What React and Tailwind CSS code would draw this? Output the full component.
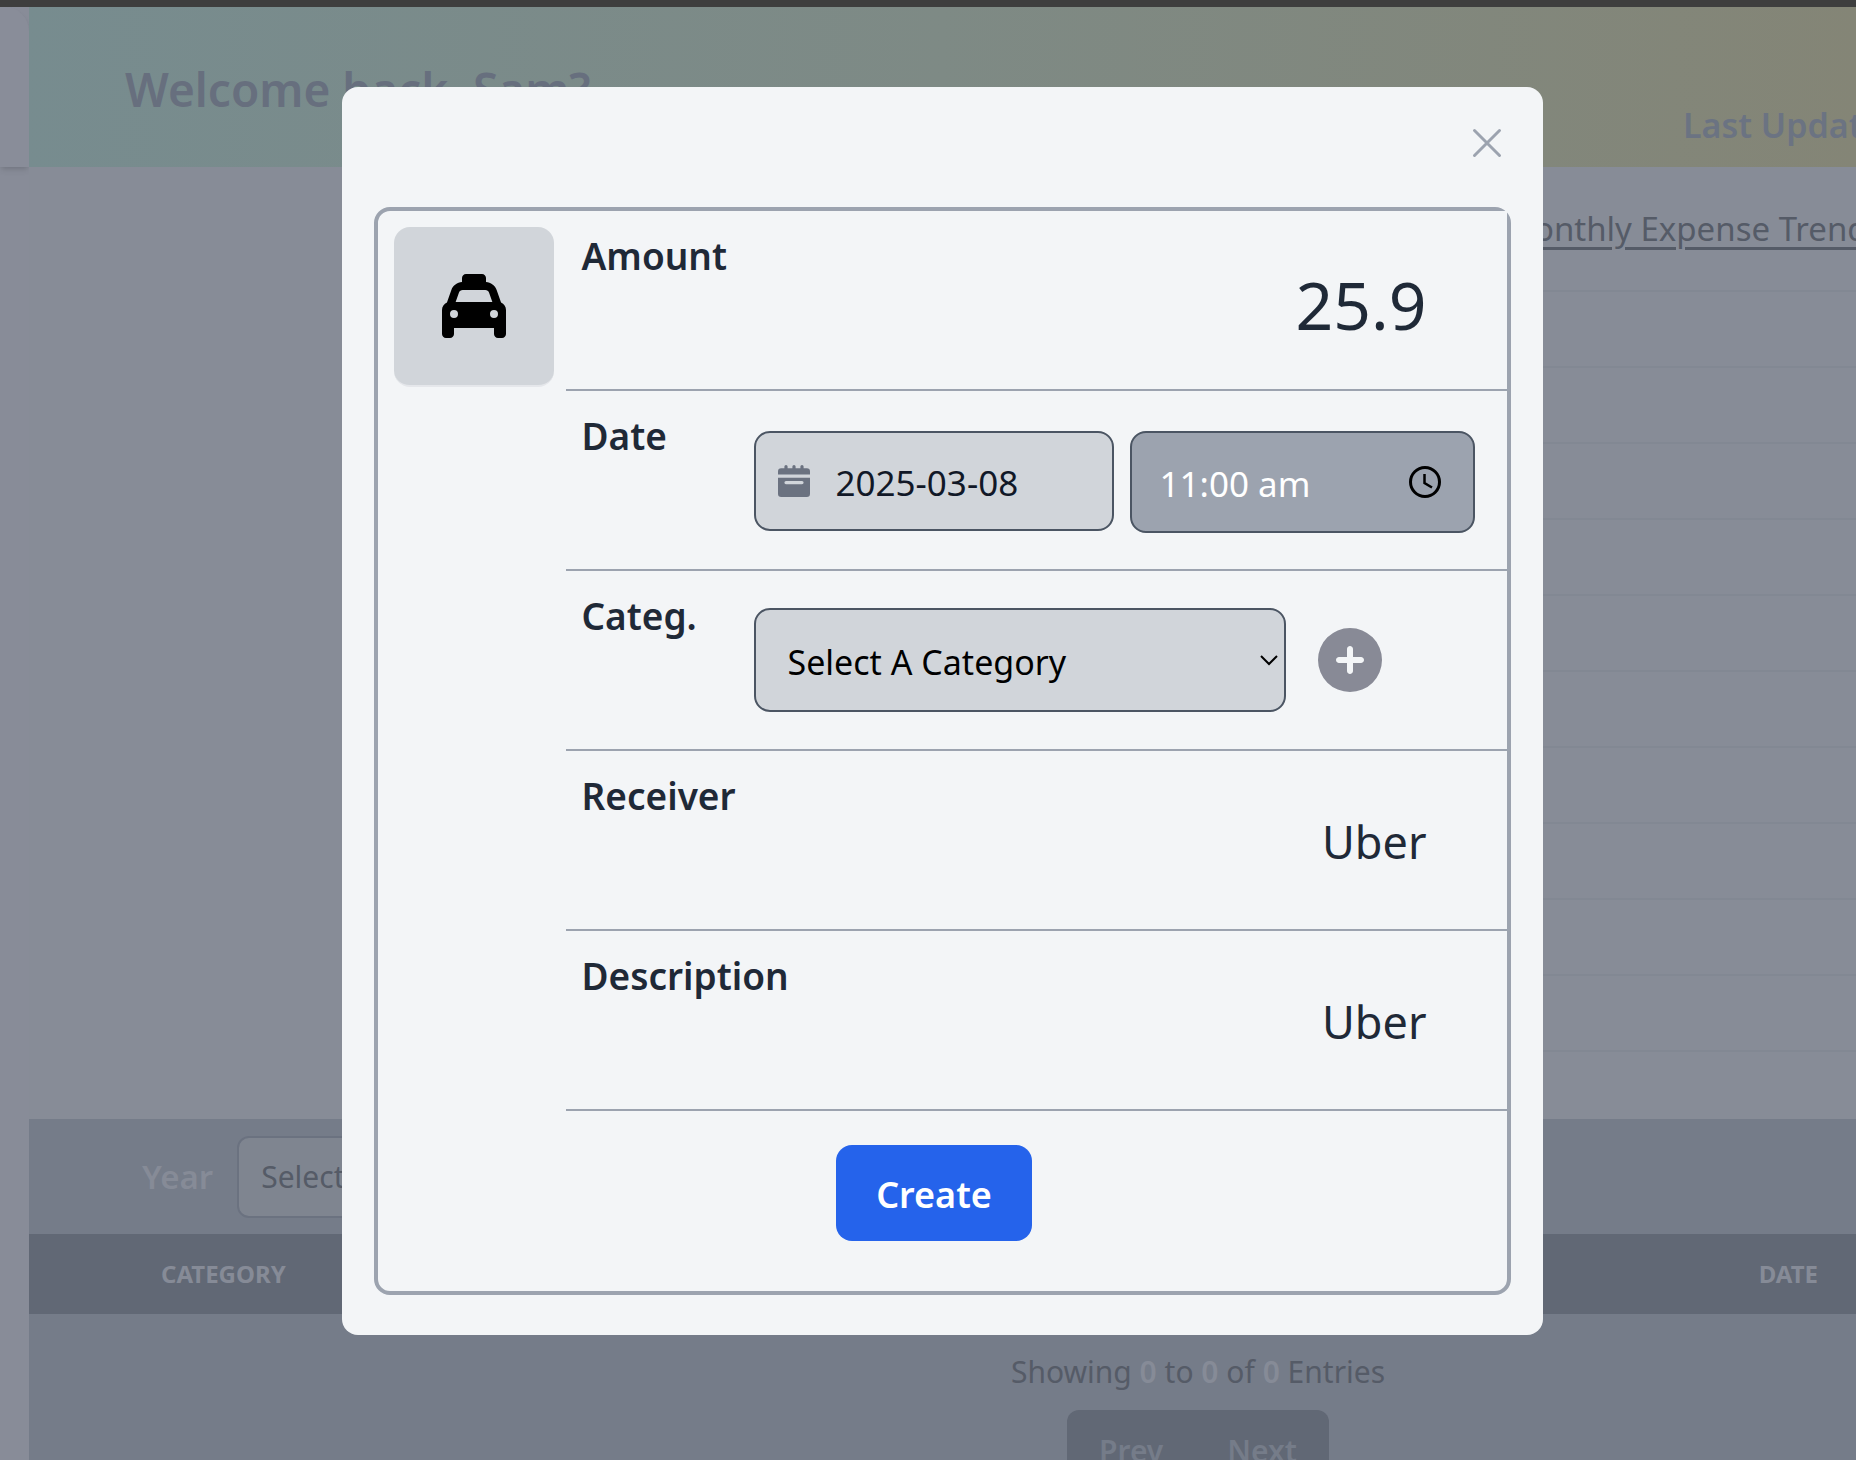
import React from "react";
import { FaTaxi, FaCirclePlus } from "react-icons/fa6";

function CloseIcon() {
  return (
    <svg viewBox="0 0 32 32" className="size-8" fill="none" stroke="currentColor" strokeWidth="3" strokeLinecap="round">
      <path d="M3.5 3.5 28.5 28.5M28.5 3.5 3.5 28.5" />
    </svg>
  );
}

function CalendarIcon() {
  return (
    <svg viewBox="0 0 20 20" className="size-8 shrink-0" fill="currentColor" aria-hidden="true">
      <path d="M0 18a2 2 0 0 0 2 2h16a2 2 0 0 0 2-2V8H0v10Zm5-8h10a1 1 0 0 1 0 2H5a1 1 0 0 1 0-2ZM18 2h-2V1a1 1 0 0 0-2 0v1h-3V1a1 1 0 0 0-2 0v1H6V1a1 1 0 0 0-2 0v1H2a2 2 0 0 0-2 2v2h20V4a2 2 0 0 0-2-2Z" />
    </svg>
  );
}

function ClockIcon() {
  return (
    <svg viewBox="0 0 32 32" className="size-8 shrink-0" fill="none" stroke="currentColor" strokeWidth="3" aria-hidden="true">
      <circle cx="16" cy="16" r="14.5" />
      <path d="M15.5 8v9l7.5 4.5" strokeWidth="2.5" />
    </svg>
  );
}

function ChevronIcon() {
  return (
    <svg viewBox="0 0 18 12" className="w-[18px] h-3" fill="none" stroke="currentColor" strokeWidth="2" aria-hidden="true">
      <path d="m1 2 8 8 8-8" />
    </svg>
  );
}

const GRID_LINES = 11;

function Background() {
  return (
    <div className="flex flex-1">
      <aside className="w-[29px] shrink-0 bg-[#888c98]">
        <div className="h-40 rounded-tr-3xl bg-[#898d99] shadow-md" />
      </aside>
      <main className="flex min-w-0 flex-1 flex-col bg-[#757c89]">
        <header className="flex h-40 items-center justify-between bg-linear-to-r from-[#778c8f] via-[#7e8a85] to-[#848576] pl-24">
          <h1 className="whitespace-nowrap pt-1 text-[46px] font-semibold text-[#676f7e]">Welcome back, Sam?</h1>
          <p className="w-[173px] overflow-hidden whitespace-nowrap pt-[76px] text-[34px] leading-[84px] font-semibold text-[#6b7382]">Last Updated</p>
        </header>
        <section className="flex h-[952px] flex-col items-end overflow-hidden bg-[#878c97]">
          <h2 className="w-[352px] whitespace-nowrap pt-8 text-[33px] leading-[60px] text-[#555b67] underline decoration-3 underline-offset-6">
            Monthly Expense Trends
          </h2>
          <div className="mt-[31px] w-[480px]">
            {Array.from({ length: GRID_LINES }, (_, i) => (
              <div key={i} className="h-[76px] border-t-2 border-[#828893]" />
            ))}
          </div>
        </section>
        <section>
          <div className="flex h-[115px] items-center gap-6 pl-[113px]">
            <label htmlFor="year" className="text-[33px] font-semibold text-[#868b97]">Year</label>
            <select id="year" className="h-[82px] w-80 appearance-none rounded-xl border-2 border-[#6b7280] bg-[#7f8590] pl-[22px] text-[30px] text-[#555b67]">
              <option>Select Year</option>
            </select>
          </div>
          <table className="w-full">
            <thead>
              <tr className="h-20 bg-[#616875] text-2xl font-bold text-[#868b97]">
                <th className="pl-[132px] text-left">CATEGORY</th>
                <th className="pr-[38px] text-right">DATE</th>
              </tr>
            </thead>
          </table>
          <div className="flex flex-col items-center gap-3 pt-8 pl-[511px]">
            <p className="text-[30px] leading-[52px] text-[#555b67]">
              Showing <b className="font-semibold text-[#868b97]">0</b> to <b className="font-semibold text-[#868b97]">0</b> of{" "}
              <b className="font-semibold text-[#868b97]">0</b> Entries
            </p>
            <div className="flex rounded-xl bg-[#616875] text-[30px] font-semibold text-[#757c89]">
              <button type="button" className="h-20 px-8">Prev</button>
              <button type="button" className="h-20 px-8">Next</button>
            </div>
          </div>
        </section>
      </main>
    </div>
  );
}

function Row({ label, id, children }) {
  return (
    <div className="flex h-[180px] border-b-2 border-[#9ca3af] pl-4">
      <label htmlFor={id} className="w-[172px] shrink-0 whitespace-nowrap pt-4 text-[37px] leading-[58px] font-semibold text-[#1f2937]">
        {label}
      </label>
      <div className="flex min-w-0 flex-1 items-center">{children}</div>
    </div>
  );
}

function ExpenseDialog() {
  return (
    <div role="dialog" aria-label="Create expense" className="w-full max-w-[1201px] rounded-2xl bg-[#f3f5f7] px-8 pb-10 text-[#1f2937]">
      <div className="flex h-[120px] items-start justify-end pt-10 pr-2">
        <button type="button" aria-label="Close" className="text-[#9ca3af]">
          <CloseIcon />
        </button>
      </div>
      <form className="rounded-2xl border-4 border-[#9ca3af]" onSubmit={(e) => e.preventDefault()}>
        <div className="flex">
          <div className="w-[188px] shrink-0 p-4">
            <div className="flex size-40 items-center justify-center rounded-2xl border-b-2 border-[#e5e7eb] bg-[#d1d5da] text-[64px] text-black">
              <FaTaxi />
            </div>
          </div>
          <div className="min-w-0 flex-1 bg-[#f3f5f7]">
            <Row label="Amount" id="amount">
              <input id="amount" defaultValue="25.9" className="w-full min-w-0 bg-transparent pt-2 pr-20 text-right text-[66px]" />
            </Row>
            <Row label="Date" id="date">
              <div className="flex flex-1 items-start gap-4 pt-1 pr-8">
                <div className="flex h-[100px] min-w-0 flex-1 items-center gap-[26px] rounded-2xl border-2 border-[#4b5563] bg-[#d1d5da] pl-[22px] text-[#6b7280]">
                  <CalendarIcon />
                  <input id="date" defaultValue="2025-03-08" className="w-full min-w-0 bg-transparent pt-1 text-[35px] text-[#111827]" />
                </div>
                <div className="flex h-[102px] w-[345px] shrink-0 items-center rounded-2xl border-2 border-[#4b5563] bg-[#9ca3af] pr-8 pl-7 text-black">
                  <input aria-label="Time" defaultValue="11:00 am" className="w-full min-w-0 bg-transparent pt-1 text-[35px] text-white" />
                  <ClockIcon />
                </div>
              </div>
            </Row>
            <Row label="Categ." id="category">
              <div className="relative w-[532px]">
                <select id="category" className="h-[104px] w-full appearance-none rounded-2xl border-2 border-[#4b5563] bg-[#d1d5da] pt-1 pl-8 text-[34px] text-black">
                  <option>Select A Category</option>
                </select>
                <span className="pointer-events-none absolute inset-y-0 right-2 flex items-center text-black">
                  <ChevronIcon />
                </span>
              </div>
              <button type="button" aria-label="Add category" className="ml-8 text-[64px] text-[#888a96]">
                <FaCirclePlus />
              </button>
            </Row>
            <Row label="Receiver" id="receiver">
              <input id="receiver" defaultValue="Uber" className="w-full min-w-0 bg-transparent pt-1 pr-20 text-right text-[45px]" />
            </Row>
            <Row label="Description" id="description">
              <input id="description" defaultValue="Uber" className="w-full min-w-0 bg-transparent pt-1 pr-20 text-right text-[45px]" />
            </Row>
          </div>
        </div>
        <div className="flex h-[180px] items-start justify-center pt-[34px] pr-4">
          <button type="submit" className="h-24 rounded-2xl bg-[#2563eb] px-10 pt-1 text-[36px] font-semibold text-white">
            Create
          </button>
        </div>
      </form>
    </div>
  );
}

export default function App() {
  return (
    <div className="relative flex h-screen flex-col overflow-hidden bg-[#757c89] font-['Noto_Sans',sans-serif]">
      <div className="h-[7px] shrink-0 bg-[#3e3e3e]" />
      <Background />
      <div className="absolute inset-0 flex items-start justify-center pt-[87px] pl-7">
        <ExpenseDialog />
      </div>
    </div>
  );
}
